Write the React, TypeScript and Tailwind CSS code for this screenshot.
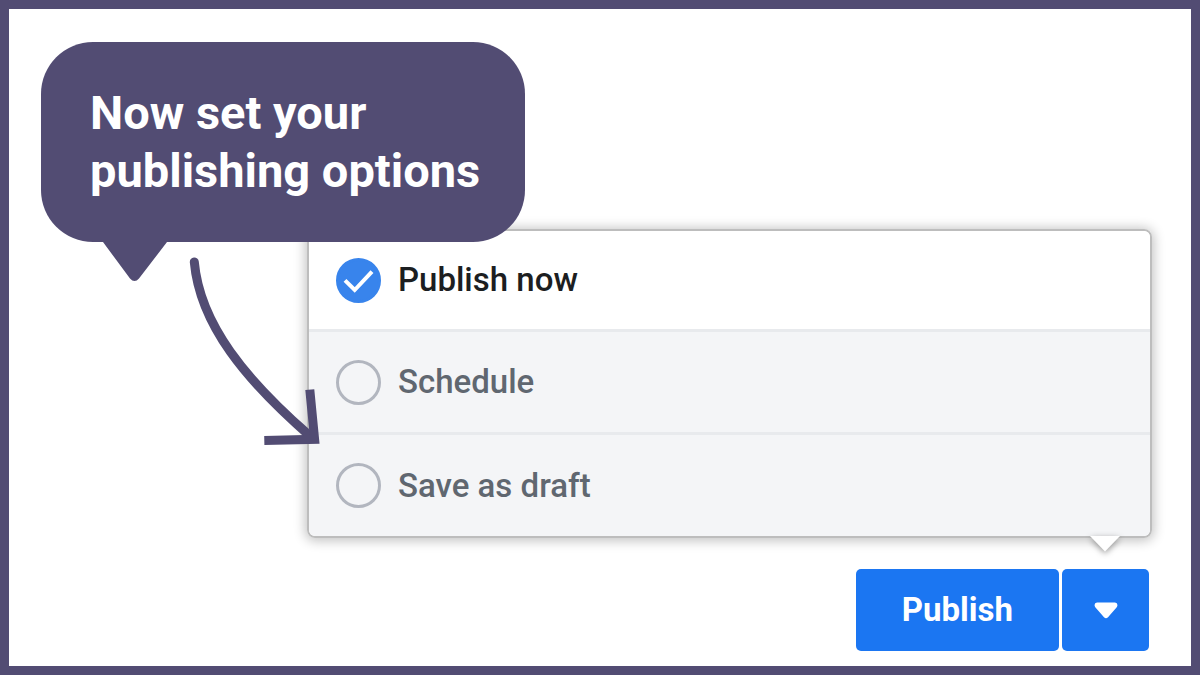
import { useState } from "react";

type PublishOption = "now" | "schedule" | "draft";

const options: { id: PublishOption; label: string; row: string }[] = [
  { id: "now", label: "Publish now", row: "h-[101px] border-b-[3px]" },
  { id: "schedule", label: "Schedule", row: "h-[103px] border-b-[3px]" },
  { id: "draft", label: "Save as draft", row: "h-[101px]" },
];

function Callout() {
  return (
    <div className="relative z-10 ml-8 mt-[33px] w-fit rounded-[52px] bg-[#524c73] pb-[42px] pl-[49px] pr-[45px] pt-[42px]">
      <h1 className="text-[47px] font-bold leading-[58px] text-white">
        Now set your
        <br />
        publishing options
      </h1>
      {/* bubble tail */}
      <svg
        className="absolute left-[60px] top-full -mt-px"
        width="68"
        height="42"
        viewBox="0 0 68 42"
        fill="#524c73"
        aria-hidden="true"
      >
        <path d="M1 0H67L66 1L38 37.6Q33.5 42.6 29 37.6L2 1Z" />
      </svg>
      {/* arrow towards the menu */}
      <svg
        className="absolute left-[147px] top-full"
        width="136"
        height="206"
        viewBox="0 0 136 206"
        fill="none"
        stroke="#524c73"
        strokeWidth="9"
        aria-hidden="true"
      >
        <path d="M6.3 20C12 83 58 138 122 194" strokeLinecap="round" />
        <path d="M121.8 147.6L126.6 197.3L76.3 198.4" strokeMiterlimit="10" />
      </svg>
    </div>
  );
}

function OptionMenu() {
  const [selected, setSelected] = useState<PublishOption>("now");

  return (
    <div className="relative -mt-[13px] ml-[298px] mr-[39px] rounded-[8px] border-2 border-[#bdbdbd] shadow-[0_1px_12px_2px_rgba(0,0,0,0.24)]">
      <fieldset aria-label="Publishing options" className="overflow-hidden rounded-[6px]">
        {options.map((o) => (
          <label
            key={o.id}
            className={`flex cursor-pointer items-center gap-[17px] border-[#e8eaed] pl-[27px] ${o.row} ${
              selected === o.id ? "bg-white text-[#1c1e21]" : "bg-[#f4f5f7] text-[#606770]"
            }`}
          >
            <span className="relative size-[45px]">
              <input
                type="radio"
                name="publish-option"
                checked={selected === o.id}
                onChange={() => setSelected(o.id)}
                className="block size-full appearance-none rounded-full border-[3px] border-[#b2b6bf] checked:border-[#3884ec] checked:bg-[#3884ec]"
              />
              {selected === o.id && (
                <svg
                  className="pointer-events-none absolute inset-0"
                  viewBox="0 0 45 45"
                  fill="none"
                  stroke="white"
                  strokeWidth="4"
                  aria-hidden="true"
                >
                  <path d="M9 22.3L18.7 32L36 13.7" />
                </svg>
              )}
            </span>
            <span className="text-[33px] font-medium leading-[40px]">{o.label}</span>
          </label>
        ))}
      </fieldset>
      {/* pointer towards the drop-down button */}
      <svg
        className="absolute right-[30px] top-full drop-shadow-[0_2px_3px_rgba(0,0,0,0.4)]"
        width="30"
        height="16"
        viewBox="0 0 30 16"
        fill="white"
        aria-hidden="true"
      >
        <path d="M0 0H30L15 15.5Z" />
      </svg>
    </div>
  );
}

export default function App() {
  return (
    <main className="flex min-h-screen flex-col border-[9px] border-[#524c73] bg-white pb-[15px] font-[Roboto,sans-serif]">
      <Callout />
      <OptionMenu />
      <div className="mr-[42px] mt-[31px] flex justify-end gap-[3px]">
        <button
          type="button"
          className="h-[82px] rounded-[5px] bg-[#1b76f2] px-[46px] text-[33px] font-bold leading-[40px] text-white"
        >
          Publish
        </button>
        <button
          type="button"
          aria-label="More publishing options"
          className="flex h-[82px] w-[87px] items-center justify-center rounded-[5px] bg-[#1b76f2]"
        >
          <svg width="24" height="17" viewBox="0 0 24 17" fill="white" aria-hidden="true">
            <path d="M3 0.5H21Q24 0.8 23.3 4Q23 5 22.3 5.7L14 15.2Q12 17.4 10 15.2L1.7 5.7Q1 5 0.7 4Q0 0.8 3 0.5Z" />
          </svg>
        </button>
      </div>
    </main>
  );
}
